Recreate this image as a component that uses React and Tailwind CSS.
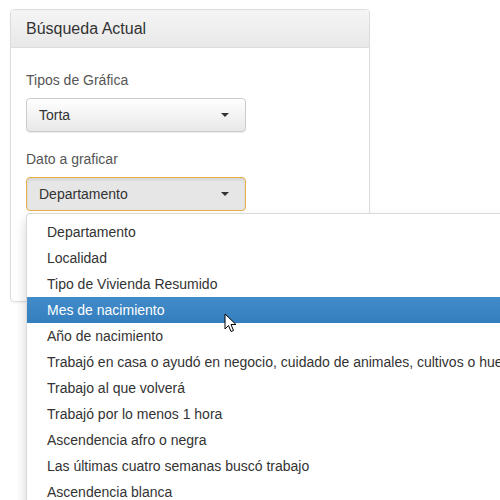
const items = [
  "Departamento",
  "Localidad",
  "Tipo de Vivienda Resumido",
  "Mes de nacimiento",
  "Año de nacimiento",
  "Trabajó en casa o ayudó en negocio, cuidado de animales, cultivos o huerta para consumo del hogar",
  "Trabajo al que volverá",
  "Trabajó por lo menos 1 hora",
  "Ascendencia afro o negra",
  "Las últimas cuatro semanas buscó trabajo",
  "Ascendencia blanca",
  "Ascendencia indígena",
  "Ascendencia asiática",
];

function Cursor() {
  return (
    <svg className="absolute left-[224px] top-[313px] z-30" width="14" height="20" viewBox="0 0 14 20">
      <path d="M1 1 L1 16 L4.5 12.5 L7 18.5 L9.5 17.5 L7 11.5 L12 11.5 Z" fill="#fff" stroke="#000" strokeWidth="1" strokeLinejoin="round" />
    </svg>
  );
}

export default function App() {
  return (
    <div
      className="relative w-[500px] h-[500px] overflow-hidden bg-white text-[14px] text-[#333]"
      style={{ fontFamily: '"Liberation Sans", Arial, sans-serif' }}
    >
      <div className="pt-[9px] pl-[10px]">
        <div className="w-[360px] h-[293px] border border-[#ddd] rounded-[4px] shadow-[0_1px_2px_rgba(0,0,0,0.05)] bg-white">
          <div className="h-[38px] px-[15px] flex items-center bg-gradient-to-b from-[#f5f5f5] to-[#e8e8e8] border-b border-[#ddd] rounded-t-[3px]">
            <h3 className="text-[16px] leading-[18px] text-[#333]">Búsqueda Actual</h3>
          </div>
          <div className="px-[15px] pt-[22px]">
            <label className="block leading-[20px] text-[#555] mb-[8px]">Tipos de Gráfica</label>
            <button className="w-[220px] h-[34px] px-[12px] flex items-center border border-[#ccc] rounded-[4px] bg-gradient-to-b from-white to-[#e8e8e8] shadow-[inset_0_1px_0_rgba(255,255,255,0.15),0_1px_1px_rgba(0,0,0,0.075)] text-[#333]">
              Torta
              <span className="ml-auto mr-[4px] inline-block w-0 h-0 border-x-[4px] border-x-transparent border-t-[4px] border-t-[#333]" />
            </button>

            <label className="block leading-[20px] text-[#555] mt-[17px] mb-[8px]">Dato a graficar</label>
            <div className="relative">
              <button className="w-[220px] h-[34px] px-[12px] flex items-center border border-[#e9b04a] rounded-[4px] bg-[#e6e6e6] shadow-[inset_0_2px_3px_rgba(0,0,0,0.08)] text-[#333]">
                Departamento
                <span className="ml-auto mr-[4px] inline-block w-0 h-0 border-x-[4px] border-x-transparent border-t-[4px] border-t-[#333]" />
              </button>
              <ul className="absolute left-0 top-full mt-[2px] z-20 py-[5px] bg-white border border-[rgba(0,0,0,0.15)] rounded-[4px] shadow-[0_6px_12px_rgba(0,0,0,0.175)] whitespace-nowrap">
                {items.map((item, i) => (
                  <li
                    key={item}
                    className={
                      i === 3
                        ? "px-[20px] leading-[26px] text-white bg-gradient-to-b from-[#428bca] to-[#357ebd]"
                        : "px-[20px] leading-[26px] text-[#333]"
                    }
                  >
                    {item}
                  </li>
                ))}
              </ul>
            </div>
          </div>
        </div>
      </div>
      <Cursor />
    </div>
  );
}
